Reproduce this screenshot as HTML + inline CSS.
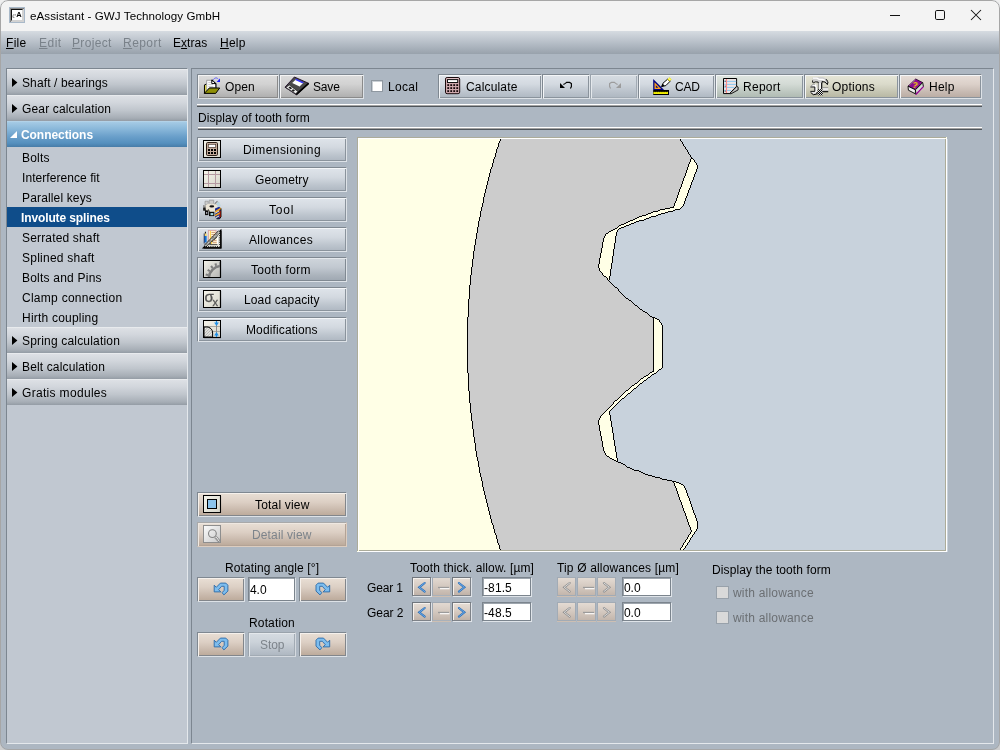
<!DOCTYPE html>
<html lang="en">
<head>
<meta charset="utf-8">
<title>eAssistant - GWJ Technology GmbH</title>
<style>
*{box-sizing:border-box;margin:0;padding:0}
html,body{width:1000px;height:750px;overflow:hidden;background:linear-gradient(#efefef,#cdcdcd)}
body{font-family:"Liberation Sans",Arial,sans-serif;font-size:12px;color:#000;position:relative}
.a{position:absolute}
svg{position:absolute;overflow:visible}
#win{position:absolute;left:0;top:0;width:1000px;height:750px;background:#adb7c2;border-radius:8px;overflow:hidden}
#frame{position:absolute;left:0;top:0;width:1000px;height:750px;border:1px solid #a6a6a6;border-radius:8px}
#title{position:absolute;left:0;top:0;width:1000px;height:31px;background:#f3f3f3}
#menu{position:absolute;left:1px;top:31px;width:998px;height:23px;background:linear-gradient(#d6dbe1 0%,#b7bfc8 50%,#98a2ac 100%)}
.tx{position:absolute;white-space:nowrap;line-height:14px;height:14px;will-change:transform}
u{text-decoration:underline;text-underline-offset:1px;text-decoration-thickness:1px}
#side{position:absolute;left:6px;top:68px;width:182px;height:676px;background:#c1c8d1;border-left:1px solid #7c8690;border-top:1px solid #7c8690;border-right:1px solid #e4e8ec;border-bottom:1px solid #e4e8ec}
.hd{position:absolute;left:7px;width:180px;height:26px;background:linear-gradient(#eef0f2 0%,#dcdfe4 6%,#d2d6dc 30%,#bfc5cc 60%,#a7aeb6 88%,#949ca5 100%)}
.hd.s{background:linear-gradient(#b9d6ea 0%,#a3c9e4 6%,#8ab8da 30%,#6a9fca 60%,#5590be 85%,#477ca8 100%)}
.tri{position:absolute;width:0;height:0;border-left:5px solid #000;border-top:4.5px solid transparent;border-bottom:4.5px solid transparent}
.selrow{position:absolute;left:7px;top:207px;width:180px;height:20px;background:#0f4d8a}
#main{position:absolute;left:191px;top:68px;width:803px;height:676px;border-left:1px solid #7c8690;border-top:1px solid #7c8690;border-right:1px solid #e4e8ec;border-bottom:1px solid #e4e8ec}
.b{position:absolute;height:25px;border-top:1px solid #7f8891;border-left:1px solid #7f8891;border-right:1px solid #dde2e7;border-bottom:1px solid #dde2e7;background:linear-gradient(#dfe4ea 0%,#d3d9e0 40%,#bcc4cd 75%,#aeb7c1 100%);box-shadow:inset 1px 1px 0 #f4f6f8, inset -1px -1px 0 #8a939c}
.b.dn{background:linear-gradient(#cfd5db 0%,#c2c9d1 40%,#abb3bc 75%,#9ea7b1 100%);box-shadow:inset 1px 1px 0 #e4e8ec, inset -1px -1px 0 #808992}
.b.dis{border-color:#9aa3ac #d5dae0 #d5dae0 #9aa3ac;box-shadow:inset 1px 1px 0 #e4e8ec, inset -1px -1px 0 #a2abb4;background:linear-gradient(#d6dce2 0%,#cbd2d9 40%,#b9c1ca 75%,#adb6c0 100%)}
.b.tan{background:linear-gradient(#e9dfd5 0%,#dccfc4 40%,#c8b8ab 75%,#bba999 100%);box-shadow:inset 1px 1px 0 #f6f1ec, inset -1px -1px 0 #82868b}
.b.tand{border-color:#a9a9a9 #dccdc0 #dccdc0 #a9a9a9;background:linear-gradient(#e9dfd5 0%,#dccfc4 40%,#c8b8ab 75%,#bba999 100%);box-shadow:inset 1px 1px 0 #efe8e1, inset -1px -1px 0 #b3a396}
.b.gry{background:linear-gradient(#dcdcdc 0%,#d2d2d2 40%,#bcbcbc 75%,#adadad 100%);box-shadow:inset 1px 1px 0 #f4f4f4, inset -1px -1px 0 #8a8a8a}
.b.grn{background:linear-gradient(#e0e6e1 0%,#d3dad5 40%,#bcc6bf 75%,#aeb9b1 100%)}
.b.olv{background:linear-gradient(#e6e6d8 0%,#dadaca 40%,#c4c4b1 75%,#b6b6a2 100%)}
.b.pnk{background:linear-gradient(#e7ded8 0%,#dbd0c9 40%,#c6b9b1 75%,#b9aba2 100%)}
.sep{position:absolute;left:198px;width:784px;height:3px;background:linear-gradient(#fff 0,#fff 33.3%,#a3a3a3 33.3%,#a3a3a3 66.6%,#4f555b 66.6%)}
.f{position:absolute;background:#fff;border:1px solid #7b848d;box-shadow:inset 1px 1px 0 #9da5ad, 1px 1px 0 #dfe4e9}
.cb{position:absolute;width:12px;height:12px;background:#fff;border:1px solid #8f98a1;box-shadow:inset 1px 1px 0 #c9cfd5}
.cbd{position:absolute;width:13px;height:13px;background:#d9d9d9;border:1px solid #98a1aa}
.sb{position:absolute;width:19px;height:19px;border:1px solid #7b7f85;border-color:#70767d #7e8288 #7e8288 #70767d;background:linear-gradient(#e6ddd5 0%,#d8cdc4 45%,#c0b2a8 100%);box-shadow:inset 1px 1px 0 #f5f1ed, 1px 1px 0 #dfe3e8}
.sb.dis{border-color:#a2abb5;box-shadow:0 1px 0 #cdbfb3;background:linear-gradient(#e4dbd3 0%,#d6cbc2 45%,#c3b6ac 100%)}
.sb.mid{border-color:#9fa8b2 #a9b1ba #a9b1ba #9fa8b2;box-shadow:0 1px 0 #cdbfb3;background:linear-gradient(#e2d9d1 0%,#d5cac1 45%,#c2b5ab 100%)}
</style>
</head>
<body>
<div id="win">
<div id="title"></div><div id="menu"></div>

<div id="side"></div>
<div class="hd" style="top:69px"></div>
<div class="hd" style="top:95px"></div>
<div class="hd s" style="top:121px"></div>
<div class="selrow"></div>
<div class="hd" style="top:327px"></div>
<div class="hd" style="top:353px"></div>
<div class="hd" style="top:379px"></div>
<svg style="left:12px;top:78px" width="6" height="9"><path d="M0 0L5.4 4.5L0 9z" fill="#000"/></svg>
<svg style="left:12px;top:104px" width="6" height="9"><path d="M0 0L5.4 4.5L0 9z" fill="#000"/></svg>
<svg style="left:12px;top:336px" width="6" height="9"><path d="M0 0L5.4 4.5L0 9z" fill="#000"/></svg>
<svg style="left:12px;top:362px" width="6" height="9"><path d="M0 0L5.4 4.5L0 9z" fill="#000"/></svg>
<svg style="left:12px;top:388px" width="6" height="9"><path d="M0 0L5.4 4.5L0 9z" fill="#000"/></svg>
<svg style="left:10px;top:131px" width="7" height="7"><path d="M7 0V7H0z" fill="#fff"/></svg>
<div id="main"></div>
<div class="b gry" style="left:197px;top:74px;width:82px"></div>
<div class="b gry" style="left:279px;top:74px;width:85px"></div>
<div class="b " style="left:438px;top:74px;width:104px"></div>
<div class="b " style="left:542px;top:74px;width:48px"></div>
<div class="b dis" style="left:590px;top:74px;width:48px"></div>
<div class="b " style="left:638px;top:74px;width:77px"></div>
<div class="b grn" style="left:715px;top:74px;width:89px"></div>
<div class="b olv" style="left:804px;top:74px;width:95px"></div>
<div class="b pnk" style="left:899px;top:74px;width:83px"></div>
<div class="cb" style="left:371px;top:80px"></div>
<div class="sep" style="top:104px;left:197px;width:785px"></div><div class="sep" style="top:127px"></div>
<div class="b " style="left:197px;top:137px;width:150px"></div>
<div class="b " style="left:197px;top:167px;width:150px"></div>
<div class="b " style="left:197px;top:197px;width:150px"></div>
<div class="b " style="left:197px;top:227px;width:150px"></div>
<div class="b dn" style="left:197px;top:257px;width:150px"></div>
<div class="b " style="left:197px;top:287px;width:150px"></div>
<div class="b " style="left:197px;top:317px;width:150px"></div>
<div class="b tan" style="left:197px;top:492px;width:150px"></div>
<div class="b tand" style="left:197px;top:522px;width:150px"></div>
<div class="b tan" style="left:197px;top:577px;width:48px"></div>
<div class="b tan" style="left:299px;top:577px;width:48px"></div>
<div class="b tan" style="left:197px;top:632px;width:48px"></div>
<div class="b dis" style="left:248px;top:632px;width:48px"></div>
<div class="b tan" style="left:299px;top:632px;width:48px"></div>
<div class="f" style="left:248px;top:577px;width:47px;height:24px"></div>
<div class="f" style="left:482px;top:577px;width:49px;height:19px"></div>
<div class="f" style="left:622px;top:577px;width:49px;height:19px"></div>
<div class="sb" style="left:412px;top:577px"></div>
<div class="sb dis" style="left:557px;top:577px"></div>
<div class="sb mid" style="left:432px;top:577px"></div>
<div class="sb dis" style="left:577px;top:577px"></div>
<div class="sb" style="left:452px;top:577px"></div>
<div class="sb dis" style="left:597px;top:577px"></div>
<div class="f" style="left:482px;top:602px;width:49px;height:19px"></div>
<div class="f" style="left:622px;top:602px;width:49px;height:19px"></div>
<div class="sb" style="left:412px;top:602px"></div>
<div class="sb dis" style="left:557px;top:602px"></div>
<div class="sb mid" style="left:432px;top:602px"></div>
<div class="sb dis" style="left:577px;top:602px"></div>
<div class="sb" style="left:452px;top:602px"></div>
<div class="sb dis" style="left:597px;top:602px"></div>
<div class="cbd" style="left:716px;top:586px"></div><div class="cbd" style="left:716px;top:611px"></div>
<svg style="left:0;top:0;will-change:transform" width="1000" height="750" viewBox="0 0 1000 750">
<defs>
<linearGradient id="gcream" x1="0" y1="0" x2="1" y2="1"><stop offset="0" stop-color="#f6f5ec"/><stop offset="1" stop-color="#d6d5ca"/></linearGradient>
<linearGradient id="ggray" x1="0" y1="0" x2="1" y2="1"><stop offset="0" stop-color="#f4f3ea"/><stop offset="1" stop-color="#b4b4b2"/></linearGradient>
<linearGradient id="gwh" x1="0" y1="0" x2="1" y2="1"><stop offset="0" stop-color="#fcfcfc"/><stop offset="1" stop-color="#c9c9c9"/></linearGradient>
<linearGradient id="gsh" x1="0" y1="0" x2="0" y2="1"><stop offset="0" stop-color="#777"/><stop offset=".35" stop-color="#fff"/><stop offset="1" stop-color="#999"/></linearGradient>
<pattern id="hatch" width="2" height="2" patternUnits="userSpaceOnUse" patternTransform="rotate(-45)"><rect width="2" height="2" fill="#f4f4ee"/><rect width="2" height=".6" fill="#8a8a8a"/></pattern>
<pattern id="chk" width="2" height="2" patternUnits="userSpaceOnUse"><rect width="2" height="2" fill="#000"/><rect width="1" height="1" fill="#ddd"/><rect x="1" y="1" width="1" height="1" fill="#ddd"/></pattern>
<clipPath id="cptf"><rect x="204" y="261" width="16" height="16"/></clipPath>
</defs>
<!-- app icon -->
<rect x="9.5" y="7.5" width="15" height="15" fill="#d2d2d2" stroke="#a9b9c9"/>
<path d="M10 8h14l-2.2 2.2h-9.6v9.6L10 22z" fill="#111"/>
<path d="M10 8h14l-1 1H11v12l-1 1z" fill="#8a8a8a"/>
<rect x="12" y="10" width="10" height="10" fill="#fff"/>
<text x="12.3" y="17.6" font-size="8.5" font-family="Liberation Serif" font-style="italic" fill="#6e6e6e">e</text><text x="16.3" y="17.4" font-size="7.5" font-weight="bold" font-family="Liberation Sans" fill="#000">A</text>
<!-- window controls -->
<g fill="none" stroke="#111" stroke-width="1"><path d="M890 15.5h10"/><rect x="935.5" y="10.5" width="9" height="9" rx="1.3"/><path d="M971 10l10 10M981 10l-10 10" stroke-width="1.05"/></g>
<!-- open -->
<path d="M206.7 91.5V80.3H212L215.6 83.8V87.6H209.5z" fill="#fff" stroke="#8c8c8c" stroke-width=".8"/>
<path d="M208.3 82.4h3M208.3 84.4h4.6M208.3 86.4h5" stroke="#c4c4c4" stroke-width=".9"/>
<path d="M211.8 79.8V83.6H216V88" stroke="#000" stroke-width="1" fill="none"/><path d="M211.8 79.8L216 83.8" stroke="#000" stroke-width="1.1"/>
<circle cx="213.3" cy="82.4" r=".7" fill="#fff"/>
<path d="M204.5 84.6V93.6" stroke="#000" stroke-width="1.1"/><path d="M205 84.7l1.3-.6" stroke="#000"/>
<path d="M205.6 85.2V92.6" stroke="#dcd548" stroke-width="1.3"/>
<path d="M209.4 88H219.7L215.7 93.4H204.3z" fill="#8f8f06" stroke="#000" stroke-width="1" stroke-linejoin="round"/>
<path d="M213.2 79.6Q216 76.4 218.4 79.2" stroke="#3535ff" stroke-width="1" fill="none" stroke-dasharray="1.6 .9"/>
<path d="M220 78.6V82H216.6z" fill="#1c1cff"/>
<!-- save -->
<path d="M294.4 77L308.8 83.4L296.4 94.8L285 87.2z" fill="#4a4a4a" stroke="#1c0a24" stroke-width=".9" stroke-linejoin="round"/>
<path d="M302 89.6L308 84L308.8 83.4L296.4 94.8L295.6 94.2z" fill="#0c0c0c"/>
<path d="M296.4 94.4L308.6 83.4" stroke="#000" stroke-width="1.8"/>
<path d="M295.8 79.4L303.2 82.8L299.6 86.4L292.2 83z" fill="#fff"/>
<path d="M296.2 78.8L303.8 82.2L302.8 83.4L295.2 80z" fill="#3636ff"/>
<path d="M299.6 86.4L303.2 82.8" stroke="#bbb" stroke-width=".6"/>
<path d="M285.8 87.4L289.4 85L297.8 91.4L295.8 93.8z" fill="#ededed" stroke="#111" stroke-width=".6"/>
<path d="M288.4 87.6L290 86.6L292.2 88.2L290.6 89.3zM291.6 90.2L293.2 89.2L295 90.6L293.4 91.7z" fill="#1a1a1a"/>
<path d="M287.4 88.8L294.6 93.4" stroke="#555" stroke-width=".7" stroke-dasharray="1 1"/>
<!-- calculator -->
<rect x="445.5" y="77.5" width="14.2" height="16.2" rx="1.6" fill="#cfa9ae" stroke="#1a0a0c" stroke-width="1"/>
<path d="M446.6 78.7h12" stroke="#e3c3c7" stroke-width="1"/>
<rect x="447.5" y="79.6" width="10.2" height="2.9" fill="#fff" stroke="#111" stroke-width="1"/>
<rect x="447.3" y="84.2" width="1.8" height="1.8" fill="#14080a"/><rect x="447.3" y="87.2" width="1.8" height="1.8" fill="#14080a"/><rect x="447.3" y="90.2" width="1.8" height="1.8" fill="#14080a"/><rect x="450.3" y="84.2" width="1.8" height="1.8" fill="#14080a"/><rect x="450.3" y="87.2" width="1.8" height="1.8" fill="#14080a"/><rect x="450.3" y="90.2" width="1.8" height="1.8" fill="#14080a"/><rect x="453.3" y="84.2" width="1.8" height="1.8" fill="#14080a"/><rect x="453.3" y="87.2" width="1.8" height="1.8" fill="#14080a"/><rect x="453.3" y="90.2" width="1.8" height="1.8" fill="#14080a"/><rect x="456.3" y="84.2" width="1.8" height="1.8" fill="#14080a"/><rect x="456.3" y="87.2" width="1.8" height="1.8" fill="#14080a"/><rect x="456.3" y="90.2" width="1.8" height="1.8" fill="#14080a"/>
<!-- undo / redo -->
<path d="M560 83V88H565z" fill="#000"/><path d="M563.4 84.6L565.4 83.4L566.6 82.4H569.6L571.4 83.6V86.6L570.4 88.6" fill="none" stroke="#000" stroke-width="1.15"/>
<path d="M621 83V88H616z" fill="#9c9c9c"/><path d="M617.6 84.6L615.6 83.4L614.4 82.4H611.4L609.6 83.6V86.6L610.6 88.6" fill="none" stroke="#9c9c9c" stroke-width="1.15"/>
<!-- CAD -->
<path d="M653.2 79V90.2H664.4z" fill="#000084"/>
<path d="M654.5 82.2V88.9H661.2z" fill="#ffa21c"/>
<path d="M655.8 85.2V87.7H658.4z" fill="#000084"/>
<rect x="653.2" y="90" width="15.8" height="5" fill="#000"/>
<path d="M653.4 92.9h14.6" stroke="#f2ee00" stroke-width="2.2"/><path d="M653.6 91.7h14.4" stroke="#000" stroke-width="1" stroke-dasharray=".7 1.1"/>
<path d="M661.6 86.6L663 83.2L667.6 79.2L670 81.4L665.8 85.6z" fill="#fff" stroke="#000" stroke-width="1" stroke-linejoin="round"/>
<path d="M661.3 87L662.7 83.8L664.6 85.6z" fill="#000"/>
<path d="M667.4 79.2L669.4 77.2L671.6 79.4L670 81.4z" fill="#f2ea00"/><path d="M668.6 78.2L670.6 80.2" stroke="#fff" stroke-width=".9"/><circle cx="670.4" cy="80.9" r=".45" fill="#3030a0"/>
<!-- report -->
<path d="M723.5 78.5H736.6V86.2L729.6 93.6H723.5z" fill="#ece4e4" stroke="#000" stroke-width="1"/>
<path d="M724.2 81.4h12M724.2 84.4h12M724.2 87.4h10M724.2 90.4h7" stroke="#8cc8f0" stroke-width="1"/>
<path d="M726.5 79V93" stroke="#ff8a8a" stroke-width="1.1"/>
<path d="M725.2 80.7v1M725.2 85.7v1M725.2 90.7v1" stroke="#222" stroke-width=".9"/>
<path d="M736.8 86.4L738.1 87.1V89.9L731.2 93.7H729.6z" fill="#c6c6c6" stroke="#000" stroke-width=".9" stroke-linejoin="round"/>
<!-- options -->
<path d="M812.4 78.6Q812.4 77.2 814 77.1H822Q826.4 77.6 827.9 82.4L827.6 84.2Q825.6 80.9 822.2 81.3V83.2H818.4V81.7Q815 81 813 82.6L812.4 81.6z" fill="#cfcfcf"/>
<path d="M813 78.2H817L819 79.4H822.4L825 80.4" stroke="#fff" stroke-width="1.3" fill="none"/>
<path d="M812.6 80.4V82.2L813.2 82.9Q815 81.3 818.2 82V83.2" stroke="#000" stroke-width=".9" fill="none"/>
<path d="M822 83.2V81.6Q825.4 81 827.4 84.6L827.9 82.2Q827.4 80.4 826.2 79.2" stroke="#000" stroke-width="1" fill="none"/>
<path d="M826 79L827.9 82.6" stroke="#555" stroke-width=".9"/>
<rect x="818.4" y="83" width="3.8" height="6.4" fill="#bdbdbd"/><rect x="819.3" y="83" width="1.5" height="6.4" fill="#fff"/><path d="M821.7 83V89.4" stroke="#000" stroke-width="1.1"/><path d="M818.4 83V89.4" stroke="#666" stroke-width=".7"/>
<rect x="817.6" y="89.2" width="5.2" height="6.2" fill="url(#chk)"/>
<path d="M810.3 86.6L813 84.4H816.4Q818 89 816.6 93.8L813.4 94.6L810.3 92.2L811 91.2H814.6V87.4H811z" fill="#e2e2e2"/>
<path d="M812.8 85.2H815.6Q816.6 89 815.8 92.6" stroke="#fff" stroke-width="1.2" fill="none"/>
<path d="M810.4 87H814.8V91.4H810.4" stroke="#000" stroke-width=".9" fill="none"/>
<path d="M810.6 92.4L813.4 94.7L816.8 94L817.2 92" stroke="#000" stroke-width="1" fill="none"/>
<path d="M810.8 86.2L813 84.3H815" stroke="#777" stroke-width=".6" fill="none"/>
<rect x="822.6" y="87.3" width="5.6" height="4.4" fill="url(#gsh)"/><path d="M822.6 91.7h5.6" stroke="#000" stroke-width="1.1"/>
<!-- help -->
<path d="M915.7 79L922.7 82.6L915.4 89.8L908 86.2z" fill="#8c0a92" stroke="#1c001c" stroke-width=".8" stroke-linejoin="round"/>
<path d="M909.2 85.4L915.4 79.6" stroke="#e8c8e8" stroke-width=".8" stroke-dasharray=".7 .7"/>
<path d="M908 86.2L915.4 89.8V93.8L908.4 90.2z" fill="#f2f2f2" stroke="#000" stroke-width=".9" stroke-linejoin="round"/>
<path d="M915.4 89.8L922.7 82.6L923.4 86.4L916 94.3z" fill="#d6dad6" stroke="#000" stroke-width=".9" stroke-linejoin="round"/>
<path d="M915.7 94.5L923.5 86.6" stroke="#a000a0" stroke-width="1.1"/>
<text x="912.6" y="87.9" font-size="9" font-weight="bold" font-family="Liberation Sans" fill="#f6ea00" transform="rotate(14 915 85)">?</text>
<!-- left icons: dimensioning -->
<rect x="203.5" y="140.5" width="17" height="17" fill="url(#gcream)" stroke="#000"/>
<rect x="206.5" y="142.5" width="11" height="13" rx="1.2" fill="#c3ab9b" stroke="#2c1e16" stroke-width="1"/>
<rect x="208.3" y="144.3" width="7.4" height="3" fill="#fff" stroke="#3a2a20" stroke-width=".6"/>
<path d="M208 149h2v2h-2zM211 149h2v2h-2zM214 149h2v2h-2zM208 152h2v2h-2zM211 152h2v2h-2zM214 152h2v2h-2z" fill="#000"/>
<!-- geometry -->
<rect x="203.5" y="170.5" width="17" height="17" fill="url(#gcream)" stroke="#000"/>
<path d="M208.5 171V187M215.5 171V187M204 174.5H220M204 183.5H220" stroke="#b59aa2" stroke-width="1"/>
<!-- tool -->
<path d="M205 204.6V201.2H208.2V204.6zM209.2 204.2V200.2H213.7V204.2zM214.3 204.8L216.9 201.3L218.7 202.5L217.5 205.6z" fill="#cbcbcb" stroke="#8a8a8a" stroke-width=".6"/>
<path d="M203.2 205H206.2V210.6H203.2z" fill="#5c5c5c"/><path d="M203.2 208H206.2V210.6H203.2z" fill="#1c1c1c"/><path d="M203.4 205.2H205.8V206.6H203.4z" fill="#bdbdbd"/>
<path d="M205.6 205.2L208.2 203.8H214.2L218 205.4L216.8 209.2L213.8 211.8H208.6L205.8 209.8z" fill="#ece5d6"/>
<ellipse cx="211.8" cy="206.4" rx="2.4" ry="1.15" fill="#111"/><path d="M210 205.8q1.8-1.3 3.6 0" stroke="#555" stroke-width=".5" fill="none"/>
<path d="M205 210.4H208.3V215.1H205z" fill="#0a0a0a"/><rect x="206" y="212.3" width="1.3" height="1.3" fill="#e4e4f6"/>
<path d="M208.3 209.4L209.4 211.8" stroke="#111" stroke-width=".9"/>
<path d="M209 211.8H214.3V216.1H209z" fill="#0a0a0a"/><rect x="210.5" y="213.1" width="2.8" height="2.1" fill="#a8dcea"/>
<path d="M216.3 203L219 202L220.9 205.8L218 207z" fill="#b9d6e2"/><path d="M214.6 203.8L217.2 201.4" stroke="#555" stroke-width=".7"/>
<path d="M215 208.4L219.2 206.8L221 208.4V216.8L219.6 218.8H216.6L215 216.8z" fill="#1c2c94"/>
<path d="M215 211L221 207.6V209.4L215 212.8zM215 214.8L221 211.4V213.2L215 216.6z" fill="#f7a416"/>
<path d="M215 212.8L219 210.5V211.5L215 213.8zM215.6 217.3L219 215.4V216.4L216.4 217.9z" fill="#fff6c8"/>
<path d="M219.6 211.2L221 210.4V216.8L219.6 218.2z" fill="#e0240c"/>
<path d="M221 208.4V216.8L219.6 218.8H216.6" stroke="#000" stroke-width=".9" fill="none"/>
<!-- allowances -->
<rect x="208.4" y="230.4" width="7.6" height="14.4" fill="#fdf3d4" stroke="#d9a3a3" stroke-width=".9"/>
<path d="M210.4 231V244.4" stroke="#ffd246" stroke-width="1"/>
<path d="M211.4 232.5h4M211.4 234.5h4M211.4 236.5h4M211.4 238.5h4M212.4 240.6h3.2M212.4 242.6h3.2" stroke="#c58a68" stroke-width=".8"/>
<path d="M203.3 247.8L220.8 230.1V247.8z" fill="#e2e2da" stroke="#000" stroke-width="1.2" stroke-linejoin="miter"/>
<path d="M209.6 244.6H217.6V236.4z" fill="#fdf3d4" stroke="#222" stroke-width=".8"/>
<path d="M211.6 244V238.6" stroke="#ffd246" stroke-width="1"/><path d="M213 240.6h3.6M213 242.6h3.6" stroke="#c58a68" stroke-width=".8"/>
<path d="M217.6 236.6V244.6" stroke="#fff" stroke-width="1.2"/>
<path d="M205.2 246L219.4 231.6" stroke="#000" stroke-width="2.9"/><path d="M205.4 245.8L219.4 231.6" stroke="#e6e6de" stroke-width="1.6"/><path d="M206.4 244.8L219.2 231.8" stroke="#000" stroke-width=".8" stroke-dasharray=".8 1.2"/>
<path d="M206 246.6H219.6" stroke="#000" stroke-width="1" stroke-dasharray=".9 1.3"/><path d="M219.7 233V246.4" stroke="#000" stroke-width="1" stroke-dasharray=".9 1.3"/>
<path d="M203.6 247.9H220.9V230.4" stroke="#000" stroke-width="1.3" fill="none"/>
<rect x="204.3" y="235.8" width="2.3" height="6.6" fill="#1273d6"/><path d="M204.3 233.4H206.6V236H204.3z" fill="#ffda66"/><path d="M204.9 231.8H206V233.6H204.9z" fill="#222"/><path d="M204.2 233.4V243.6" stroke="#0a1a50" stroke-width=".8"/>
<!-- tooth form -->
<rect x="203.5" y="260.5" width="17" height="17" fill="url(#ggray)" stroke="#000"/><path d="M204 277.5H221M220.5 261V277.5" stroke="#000" stroke-width="1.2"/>
<g clip-path="url(#cptf)"><circle cx="221.5" cy="278.5" r="12.6" fill="none" stroke="#7e7e7e" stroke-width="2.6"/><circle cx="221.5" cy="278.5" r="15" fill="none" stroke="#7e7e7e" stroke-width="2.6" stroke-dasharray="2 2.6" stroke-dashoffset="1"/></g>
<!-- load capacity -->
<rect x="203.5" y="290.5" width="17" height="17" fill="url(#gcream)" stroke="#000"/><path d="M204 307.5H221M220.5 291V307.5" stroke="#000" stroke-width="1.2"/>
<text x="204.6" y="302.2" font-size="15" font-family="Liberation Sans" fill="#555" stroke="#555" stroke-width=".35">σ</text><text x="212.6" y="305.8" font-size="11" font-family="Liberation Sans" fill="#555" stroke="#555" stroke-width=".3">x</text>
<!-- modifications -->
<rect x="203.5" y="320.5" width="17" height="17" fill="url(#gcream)" stroke="#000"/><path d="M204 337.5H221" stroke="#000" stroke-width="1.2"/>
<path d="M204 326.5H220M211 331.5H220" stroke="#a8a8a0" stroke-width="1"/><path d="M216.5 321V337" stroke="#8a8a8a" stroke-width="1"/>
<path d="M204 337V327H208Q212.6 328.4 212.6 333V337z" fill="url(#hatch)" stroke="#000" stroke-width="1"/>
<path d="M214.2 322.6H218.8L216.5 326z" fill="#1e8fe6"/><path d="M216.5 321V323" stroke="#1e8fe6" stroke-width="1.2"/>
<path d="M214.2 335.4H218.8L216.5 332z" fill="#1e8fe6"/><path d="M216.5 335V337" stroke="#1e8fe6" stroke-width="1.2"/>
<!-- total view -->
<rect x="203.5" y="495.5" width="17" height="17" fill="url(#gcream)" stroke="#000"/><path d="M204 512.5H221M220.5 496V512.5" stroke="#000" stroke-width="1.1"/>
<rect x="207.5" y="499.5" width="9" height="9" fill="#8cc4ec" stroke="#000"/>
<!-- detail view -->
<rect x="203.5" y="525.5" width="17" height="17" fill="url(#gwh)" stroke="#8e8e8e"/>
<circle cx="212.4" cy="533.6" r="3.9" fill="none" stroke="#858585" stroke-width="1.1"/>
<path d="M215.4 537L219.6 541.4" stroke="#8a8a8a" stroke-width="3"/><path d="M215.8 537.2L219.4 541" stroke="#f4f4f4" stroke-width="1.5" stroke-dasharray="1 .8"/>
<!-- rotate arrows -->
<g fill="#7dbdee" stroke="#2b69a6" stroke-width=".9" stroke-linejoin="round">
<path d="M214.2 585.2L214.2 591.9L220.8 591.9L218.6 589.7L221.6 586.3L224.2 586.3L224.2 590.3L222.1 592.7L223.9 594.9L227.9 591.1L227.9 585.2L225.8 583.1L220.4 583.1L216.3 587.3z"/><path d="M329.7 585.2L329.7 591.9L323.1 591.9L325.3 589.7L322.3 586.3L319.7 586.3L319.7 590.3L321.8 592.7L320.0 594.9L316.0 591.1L316.0 585.2L318.1 583.1L323.5 583.1L327.6 587.3z"/><path d="M214.2 640.2L214.2 646.9L220.8 646.9L218.6 644.7L221.6 641.3L224.2 641.3L224.2 645.3L222.1 647.7L223.9 649.9L227.9 646.1L227.9 640.2L225.8 638.1L220.4 638.1L216.3 642.3z"/><path d="M329.7 640.2L329.7 646.9L323.1 646.9L325.3 644.7L322.3 641.3L319.7 641.3L319.7 645.3L321.8 647.7L320.0 649.9L316.0 646.1L316.0 640.2L318.1 638.1L323.5 638.1L327.6 642.3z"/></g>
<path d="M424.7 583.0L419.2 587.3L424.7 591.6" fill="none" stroke="#2f6fb5" stroke-width="2.1" stroke-linecap="round" stroke-linejoin="miter"/><path d="M424.7 583.0L419.2 587.3L424.7 591.6" fill="none" stroke="#6fb0ee" stroke-width="0.9" stroke-linecap="round" stroke-linejoin="miter"/><path d="M438 587.5h11" stroke="#9b9b9b" stroke-width="1.3"/><path d="M440 588.7h9.5" stroke="#fff" stroke-width="1.1"/><path d="M458.9 583.0L464.4 587.3L458.9 591.6" fill="none" stroke="#2f6fb5" stroke-width="2.1" stroke-linecap="round" stroke-linejoin="miter"/><path d="M458.9 583.0L464.4 587.3L458.9 591.6" fill="none" stroke="#6fb0ee" stroke-width="0.9" stroke-linecap="round" stroke-linejoin="miter"/><path d="M424.7 608.0L419.2 612.3L424.7 616.6" fill="none" stroke="#2f6fb5" stroke-width="2.1" stroke-linecap="round" stroke-linejoin="miter"/><path d="M424.7 608.0L419.2 612.3L424.7 616.6" fill="none" stroke="#6fb0ee" stroke-width="0.9" stroke-linecap="round" stroke-linejoin="miter"/><path d="M438 612.5h11" stroke="#9b9b9b" stroke-width="1.3"/><path d="M440 613.7h9.5" stroke="#fff" stroke-width="1.1"/><path d="M458.9 608.0L464.4 612.3L458.9 616.6" fill="none" stroke="#2f6fb5" stroke-width="2.1" stroke-linecap="round" stroke-linejoin="miter"/><path d="M458.9 608.0L464.4 612.3L458.9 616.6" fill="none" stroke="#6fb0ee" stroke-width="0.9" stroke-linecap="round" stroke-linejoin="miter"/><path d="M569.7 583.0L564.2 587.3L569.7 591.6" fill="none" stroke="#8e8e8e" stroke-width="2.1" stroke-linecap="round" stroke-linejoin="miter"/><path d="M569.7 583.0L564.2 587.3L569.7 591.6" fill="none" stroke="#e2e2e2" stroke-width="0.9" stroke-linecap="round" stroke-linejoin="miter"/><path d="M583 587.5h11" stroke="#9b9b9b" stroke-width="1.3"/><path d="M585 588.7h9.5" stroke="#fff" stroke-width="1.1"/><path d="M603.9 583.0L609.4 587.3L603.9 591.6" fill="none" stroke="#8e8e8e" stroke-width="2.1" stroke-linecap="round" stroke-linejoin="miter"/><path d="M603.9 583.0L609.4 587.3L603.9 591.6" fill="none" stroke="#e2e2e2" stroke-width="0.9" stroke-linecap="round" stroke-linejoin="miter"/><path d="M569.7 608.0L564.2 612.3L569.7 616.6" fill="none" stroke="#8e8e8e" stroke-width="2.1" stroke-linecap="round" stroke-linejoin="miter"/><path d="M569.7 608.0L564.2 612.3L569.7 616.6" fill="none" stroke="#e2e2e2" stroke-width="0.9" stroke-linecap="round" stroke-linejoin="miter"/><path d="M583 612.5h11" stroke="#9b9b9b" stroke-width="1.3"/><path d="M585 613.7h9.5" stroke="#fff" stroke-width="1.1"/><path d="M603.9 608.0L609.4 612.3L603.9 616.6" fill="none" stroke="#8e8e8e" stroke-width="2.1" stroke-linecap="round" stroke-linejoin="miter"/><path d="M603.9 608.0L609.4 612.3L603.9 616.6" fill="none" stroke="#e2e2e2" stroke-width="0.9" stroke-linecap="round" stroke-linejoin="miter"/>
</svg>
<svg id="cv" style="left:357px;top:137px" width="590" height="415" viewBox="357 137 590 415" shape-rendering="crispEdges">
    <rect x="357" y="137" width="590" height="415" fill="#ffffe6"/>
    <path d="M679.5,138.5 L691.5,157.5 L696.5,163.5 L697.5,167.5 L684.5,202.5 L683.5,205.5 L680.5,208.5 L678.5,209.5 L675.5,209.5 L673.5,210.5 L671.5,211.5 L668.5,211.5 L666.5,212.5 L663.5,213.5 L661.5,213.5 L659.5,214.5 L656.5,215.5 L654.5,216.5 L651.5,216.5 L649.5,217.5 L647.5,218.5 L644.5,219.5 L642.5,220.5 L639.5,220.5 L637.5,221.5 L634.5,222.5 L632.5,223.5 L629.5,224.5 L627.5,225.5 L624.5,226.5 L622.5,227.5 L619.5,228.5 L616.5,232.5 L609.5,279.5 L604.5,284.5 L650.5,322.5 L653.5,317.5 L658.5,319.5 L662.5,325.5 L662.5,367.5 L657.5,371.5 L655.5,373.5 L652.5,374.5 L650.5,376.5 L648.5,377.5 L646.5,379.5 L644.5,380.5 L642.5,382.5 L640.5,383.5 L638.5,385.5 L636.5,387.5 L634.5,388.5 L632.5,390.5 L630.5,392.5 L628.5,393.5 L626.5,395.5 L624.5,397.5 L622.5,398.5 L620.5,400.5 L618.5,402.5 L617.5,403.5 L615.5,405.5 L613.5,407.5 L611.5,409.5 L609.5,411.5 L617.5,461.5 L612.5,470.5 L670.5,486.5 L673.5,481.5 L678.5,482.5 L683.5,485.5 L685.5,488.5 L697.5,522.5 L697.5,528.5 L682.5,551.5 L947.5,551.5 L947.5,138.5Z" fill="#c8d2dc"/>
    <path d="M500.5,138.5 L679.5,138.5 L691.5,157.5 L673.5,207.5 L670.5,207.5 L668.5,208.5 L665.5,208.5 L663.5,209.5 L661.5,209.5 L658.5,210.5 L656.5,211.5 L653.5,211.5 L651.5,212.5 L649.5,213.5 L646.5,214.5 L644.5,215.5 L642.5,215.5 L640.5,216.5 L637.5,217.5 L635.5,218.5 L633.5,219.5 L631.5,220.5 L628.5,221.5 L626.5,222.5 L624.5,223.5 L622.5,224.5 L619.5,225.5 L617.5,227.5 L609.5,231.5 L605.5,234.5 L603.5,239.5 L598.5,266.5 L599.5,270.5 L601.5,272.5 L603.5,275.5 L606.5,277.5 L608.5,280.5 L610.5,282.5 L612.5,284.5 L614.5,286.5 L617.5,288.5 L619.5,291.5 L621.5,293.5 L623.5,295.5 L625.5,297.5 L628.5,299.5 L630.5,300.5 L632.5,302.5 L634.5,304.5 L637.5,306.5 L639.5,308.5 L641.5,309.5 L643.5,311.5 L646.5,312.5 L648.5,314.5 L650.5,316.5 L653.5,317.5 L653.5,371.5 L650.5,372.5 L648.5,374.5 L646.5,375.5 L643.5,377.5 L641.5,378.5 L639.5,380.5 L637.5,382.5 L634.5,384.5 L632.5,385.5 L630.5,387.5 L628.5,389.5 L625.5,391.5 L623.5,393.5 L621.5,395.5 L619.5,397.5 L617.5,399.5 L614.5,401.5 L612.5,404.5 L610.5,406.5 L608.5,408.5 L606.5,410.5 L603.5,413.5 L601.5,415.5 L599.5,418.5 L598.5,422.5 L603.5,449.5 L605.5,454.5 L609.5,457.5 L617.5,461.5 L619.5,462.5 L622.5,463.5 L624.5,464.5 L626.5,466.5 L628.5,467.5 L631.5,468.5 L633.5,469.5 L635.5,470.5 L637.5,470.5 L640.5,471.5 L642.5,472.5 L644.5,473.5 L646.5,474.5 L649.5,475.5 L651.5,475.5 L653.5,476.5 L656.5,477.5 L658.5,477.5 L661.5,478.5 L663.5,479.5 L665.5,479.5 L668.5,480.5 L670.5,480.5 L673.5,481.5 L691.5,531.5 L679.5,550.5 L500.5,551.5 L500.5,550.5 L499.5,548.5 L499.5,546.5 L498.5,544.5 L497.5,542.5 L497.5,540.5 L496.5,538.5 L496.5,536.5 L495.5,534.5 L494.5,532.5 L494.5,530.5 L493.5,528.5 L493.5,526.5 L492.5,524.5 L491.5,522.5 L491.5,520.5 L490.5,518.5 L490.5,516.5 L489.5,514.5 L489.5,512.5 L488.5,510.5 L488.5,508.5 L487.5,506.5 L487.5,504.5 L486.5,502.5 L486.5,500.5 L485.5,498.5 L485.5,496.5 L484.5,494.5 L484.5,492.5 L483.5,490.5 L483.5,488.5 L482.5,486.5 L482.5,484.5 L482.5,482.5 L481.5,480.5 L481.5,478.5 L480.5,476.5 L480.5,474.5 L479.5,472.5 L479.5,470.5 L479.5,468.5 L478.5,466.5 L478.5,464.5 L478.5,462.5 L477.5,460.5 L477.5,458.5 L476.5,456.5 L476.5,454.5 L476.5,452.5 L475.5,450.5 L475.5,448.5 L475.5,446.5 L475.5,444.5 L474.5,442.5 L474.5,440.5 L474.5,438.5 L473.5,436.5 L473.5,434.5 L473.5,432.5 L473.5,430.5 L472.5,428.5 L472.5,426.5 L472.5,424.5 L472.5,422.5 L471.5,420.5 L471.5,418.5 L471.5,416.5 L471.5,414.5 L470.5,412.5 L470.5,410.5 L470.5,408.5 L470.5,406.5 L470.5,404.5 L469.5,402.5 L469.5,400.5 L469.5,398.5 L469.5,396.5 L469.5,394.5 L469.5,392.5 L468.5,390.5 L468.5,388.5 L468.5,386.5 L468.5,384.5 L468.5,382.5 L468.5,380.5 L468.5,378.5 L468.5,376.5 L468.5,374.5 L467.5,372.5 L467.5,370.5 L467.5,368.5 L467.5,366.5 L467.5,364.5 L467.5,362.5 L467.5,360.5 L467.5,358.5 L467.5,356.5 L467.5,354.5 L467.5,352.5 L467.5,350.5 L467.5,348.5 L467.5,346.5 L467.5,344.5 L467.5,342.5 L467.5,340.5 L467.5,338.5 L467.5,336.5 L467.5,334.5 L467.5,332.5 L467.5,330.5 L467.5,328.5 L467.5,326.5 L467.5,324.5 L467.5,322.5 L467.5,320.5 L467.5,318.5 L468.5,316.5 L468.5,314.5 L468.5,312.5 L468.5,310.5 L468.5,308.5 L468.5,306.5 L468.5,304.5 L468.5,302.5 L468.5,300.5 L469.5,298.5 L469.5,296.5 L469.5,294.5 L469.5,292.5 L469.5,290.5 L469.5,288.5 L469.5,286.5 L470.5,284.5 L470.5,282.5 L470.5,280.5 L470.5,278.5 L470.5,276.5 L471.5,274.5 L471.5,272.5 L471.5,270.5 L471.5,268.5 L472.5,266.5 L472.5,264.5 L472.5,262.5 L472.5,260.5 L473.5,258.5 L473.5,256.5 L473.5,254.5 L473.5,252.5 L474.5,250.5 L474.5,248.5 L474.5,246.5 L475.5,244.5 L475.5,242.5 L475.5,240.5 L476.5,238.5 L476.5,236.5 L476.5,234.5 L477.5,232.5 L477.5,230.5 L477.5,228.5 L478.5,226.5 L478.5,224.5 L478.5,222.5 L479.5,220.5 L479.5,218.5 L480.5,216.5 L480.5,214.5 L480.5,212.5 L481.5,210.5 L481.5,208.5 L482.5,206.5 L482.5,204.5 L483.5,202.5 L483.5,200.5 L483.5,198.5 L484.5,196.5 L484.5,194.5 L485.5,192.5 L485.5,190.5 L486.5,188.5 L486.5,186.5 L487.5,184.5 L487.5,182.5 L488.5,180.5 L488.5,178.5 L489.5,176.5 L489.5,174.5 L490.5,172.5 L490.5,170.5 L491.5,168.5 L492.5,166.5 L492.5,164.5 L493.5,162.5 L493.5,160.5 L494.5,158.5 L495.5,156.5 L495.5,154.5 L496.5,152.5 L496.5,150.5 L497.5,148.5 L498.5,146.5 L498.5,144.5 L499.5,142.5 L500.5,140.5 L500.5,138.5Z" fill="#cccccc"/>
    <path d="M467 317h1v56h-1zM468 299h1v18h-1zM468 373h1v18h-1zM469 285h1v14h-1zM469 391h1v12h-1zM470 275h1v10h-1zM470 403h1v10h-1zM471 267h1v8h-1zM471 413h1v8h-1zM472 259h1v8h-1zM472 421h1v8h-1zM473 251h1v8h-1zM473 429h1v8h-1zM474 245h1v6h-1zM474 437h1v6h-1zM475 239h1v6h-1zM475 443h1v8h-1zM476 233h1v6h-1zM476 451h1v6h-1zM477 227h1v6h-1zM477 457h1v4h-1zM478 221h1v6h-1zM478 461h1v6h-1zM479 217h1v4h-1zM479 467h1v6h-1zM480 211h1v6h-1zM480 473h1v4h-1zM481 207h1v4h-1zM481 477h1v4h-1zM482 203h1v4h-1zM482 481h1v6h-1zM483 197h1v6h-1zM483 487h1v4h-1zM484 193h1v4h-1zM484 491h1v4h-1zM485 189h1v4h-1zM485 495h1v4h-1zM486 185h1v4h-1zM486 499h1v4h-1zM487 181h1v4h-1zM487 503h1v4h-1zM488 177h1v4h-1zM488 507h1v4h-1zM489 173h1v4h-1zM489 511h1v4h-1zM490 169h1v4h-1zM490 515h1v4h-1zM491 167h1v2h-1zM491 519h1v4h-1zM492 163h1v4h-1zM492 523h1v2h-1zM493 159h1v4h-1zM493 525h1v4h-1zM494 157h1v2h-1zM494 529h1v4h-1zM495 153h1v4h-1zM495 533h1v2h-1zM496 149h1v4h-1zM496 535h1v4h-1zM497 147h1v2h-1zM497 539h1v4h-1zM498 143h1v4h-1zM498 543h1v2h-1zM499 141h1v2h-1zM499 545h1v4h-1zM500 139h1v2h-1zM500 549h1v1h-1zM598 264h1v4h-1zM598 420h1v5h-1zM599 258h1v6h-1zM599 268h1v3h-1zM599 418h1v2h-1zM599 425h1v6h-1zM600 253h1v5h-1zM600 271h1v1h-1zM600 416h1v2h-1zM600 431h1v5h-1zM601 248h1v5h-1zM601 272h1v1h-1zM601 415h1v1h-1zM601 436h1v5h-1zM602 242h1v6h-1zM602 273h1v2h-1zM602 414h1v1h-1zM602 441h1v6h-1zM603 238h1v4h-1zM603 275h1v1h-1zM603 413h1v1h-1zM603 447h1v4h-1zM604 236h1v2h-1zM604 412h1v1h-1zM604 451h1v2h-1zM604 276h2v1h-2zM605 234h1v2h-1zM605 411h1v1h-1zM605 453h1v2h-1zM606 277h1v1h-1zM606 410h1v1h-1zM606 455h1v1h-1zM606 233h2v1h-2zM607 278h1v2h-1zM607 409h1v1h-1zM607 456h2v1h-2zM608 232h1v1h-1zM608 280h1v1h-1zM608 408h1v1h-1zM609 276h1v4h-1zM609 281h1v1h-1zM609 407h1v1h-1zM609 411h1v4h-1zM609 457h1v1h-1zM609 231h2v1h-2zM610 269h1v7h-1zM610 282h1v1h-1zM610 406h1v1h-1zM610 410h1v1h-1zM610 415h1v6h-1zM610 458h2v1h-2zM611 263h1v6h-1zM611 283h1v1h-1zM611 405h1v1h-1zM611 409h1v1h-1zM611 421h1v6h-1zM611 230h2v1h-2zM612 256h1v7h-1zM612 284h1v1h-1zM612 404h1v1h-1zM612 408h1v1h-1zM612 427h1v6h-1zM612 459h2v1h-2zM613 249h1v7h-1zM613 285h1v1h-1zM613 402h1v2h-1zM613 407h1v1h-1zM613 433h1v7h-1zM613 229h2v1h-2zM614 243h1v6h-1zM614 286h1v1h-1zM614 401h1v1h-1zM614 406h1v1h-1zM614 440h1v6h-1zM614 460h2v1h-2zM615 236h1v7h-1zM615 405h1v1h-1zM615 446h1v6h-1zM615 228h2v1h-2zM615 287h2v1h-2zM615 400h2v1h-2zM616 232h1v4h-1zM616 404h1v1h-1zM616 452h1v6h-1zM616 461h2v1h-2zM617 227h1v1h-1zM617 230h1v2h-1zM617 288h1v1h-1zM617 399h1v1h-1zM617 403h1v1h-1zM617 458h1v3h-1zM618 226h1v1h-1zM618 229h1v1h-1zM618 289h1v2h-1zM618 398h1v1h-1zM618 402h1v1h-1zM618 462h3v1h-3zM619 291h1v1h-1zM619 397h1v1h-1zM619 401h1v1h-1zM619 225h2v1h-2zM619 228h2v1h-2zM620 292h1v1h-1zM620 396h1v1h-1zM620 400h1v1h-1zM621 293h1v1h-1zM621 395h1v1h-1zM621 399h1v1h-1zM621 463h2v1h-2zM621 224h3v1h-3zM621 227h3v1h-3zM622 294h1v1h-1zM622 394h1v1h-1zM622 398h2v1h-2zM623 295h1v1h-1zM623 393h1v1h-1zM623 464h2v1h-2zM624 296h1v1h-1zM624 392h1v1h-1zM624 397h1v1h-1zM624 223h2v1h-2zM624 226h2v1h-2zM625 297h1v1h-1zM625 391h1v1h-1zM625 396h1v1h-1zM625 465h1v1h-1zM626 395h1v1h-1zM626 466h1v1h-1zM626 222h2v1h-2zM626 298h2v1h-2zM626 390h2v1h-2zM626 225h3v1h-3zM627 394h1v1h-1zM627 467h3v1h-3zM628 299h1v1h-1zM628 389h1v1h-1zM628 221h2v1h-2zM628 393h2v1h-2zM629 388h1v1h-1zM629 224h2v1h-2zM629 300h2v1h-2zM630 387h1v1h-1zM630 392h1v1h-1zM630 468h2v1h-2zM630 220h3v1h-3zM631 301h1v1h-1zM631 386h1v1h-1zM631 391h1v1h-1zM631 223h3v1h-3zM632 302h1v1h-1zM632 390h1v1h-1zM632 385h2v1h-2zM632 469h2v1h-2zM633 303h1v1h-1zM633 389h1v1h-1zM633 219h2v1h-2zM634 304h1v1h-1zM634 384h1v1h-1zM634 222h2v1h-2zM634 388h2v1h-2zM634 470h5v1h-5zM635 218h2v1h-2zM635 305h2v1h-2zM635 383h2v1h-2zM636 387h1v1h-1zM636 221h3v1h-3zM637 306h1v1h-1zM637 382h1v1h-1zM637 386h1v1h-1zM637 217h2v1h-2zM638 307h1v1h-1zM638 381h1v1h-1zM638 385h1v1h-1zM639 308h1v1h-1zM639 380h1v1h-1zM639 384h1v1h-1zM639 471h2v1h-2zM639 216h3v1h-3zM639 220h5v1h-5zM640 379h1v1h-1zM640 309h2v1h-2zM640 383h2v1h-2zM641 378h2v1h-2zM641 472h2v1h-2zM642 310h1v1h-1zM642 382h1v1h-1zM642 215h4v1h-4zM643 377h1v1h-1zM643 381h1v1h-1zM643 311h2v1h-2zM643 473h2v1h-2zM644 219h2v1h-2zM644 376h2v1h-2zM644 380h2v1h-2zM645 312h2v1h-2zM645 474h3v1h-3zM646 379h1v1h-1zM646 214h2v1h-2zM646 375h2v1h-2zM646 218h3v1h-3zM647 313h1v1h-1zM647 378h1v1h-1zM648 314h1v1h-1zM648 374h1v1h-1zM648 377h2v1h-2zM648 213h3v1h-3zM648 475h4v1h-4zM649 315h1v1h-1zM649 373h1v1h-1zM649 217h2v1h-2zM650 376h1v1h-1zM650 316h2v1h-2zM650 372h2v1h-2zM651 375h1v1h-1zM651 212h2v1h-2zM651 216h5v1h-5zM652 371h2v1h-2zM652 374h2v1h-2zM652 317h3v1h-3zM652 476h3v1h-3zM653 318h1v53h-1zM653 211h5v1h-5zM654 373h2v1h-2zM655 318h2v1h-2zM655 477h5v1h-5zM656 372h1v1h-1zM656 215h2v1h-2zM657 371h1v1h-1zM657 319h2v1h-2zM658 370h1v1h-1zM658 210h2v1h-2zM658 214h3v1h-3zM659 320h1v2h-1zM659 369h2v1h-2zM660 322h1v1h-1zM660 478h2v1h-2zM660 209h5v1h-5zM661 323h1v2h-1zM661 368h1v1h-1zM661 213h4v1h-4zM662 325h1v43h-1zM662 479h5v1h-5zM665 212h3v1h-3zM665 208h5v1h-5zM667 480h5v1h-5zM668 211h5v1h-5zM670 207h4v1h-4zM672 481h4v1h-4zM673 206h1v1h-1zM673 482h1v1h-1zM673 210h2v1h-2zM674 203h1v3h-1zM674 483h1v3h-1zM675 201h1v2h-1zM675 486h1v2h-1zM675 209h5v1h-5zM676 198h1v3h-1zM676 488h1v3h-1zM676 482h3v1h-3zM677 195h1v3h-1zM677 491h1v3h-1zM678 192h1v3h-1zM678 494h1v3h-1zM679 189h1v3h-1zM679 497h1v3h-1zM679 483h2v1h-2zM680 139h1v2h-1zM680 187h1v2h-1zM680 208h1v1h-1zM680 500h1v2h-1zM680 548h1v2h-1zM681 141h1v1h-1zM681 184h1v3h-1zM681 207h1v1h-1zM681 502h1v3h-1zM681 547h1v1h-1zM681 484h2v1h-2zM682 142h1v2h-1zM682 181h1v3h-1zM682 206h1v1h-1zM682 505h1v3h-1zM682 545h1v2h-1zM683 144h1v2h-1zM683 178h1v3h-1zM683 204h1v2h-1zM683 485h1v1h-1zM683 508h1v3h-1zM683 543h1v2h-1zM683 549h1v1h-1zM684 146h1v1h-1zM684 176h1v2h-1zM684 201h1v3h-1zM684 486h1v2h-1zM684 511h1v2h-1zM684 542h1v1h-1zM684 548h1v1h-1zM685 147h1v2h-1zM685 173h1v3h-1zM685 198h1v3h-1zM685 488h1v2h-1zM685 513h1v3h-1zM685 540h1v2h-1zM685 546h1v2h-1zM686 149h1v1h-1zM686 170h1v3h-1zM686 196h1v2h-1zM686 490h1v3h-1zM686 516h1v3h-1zM686 539h1v1h-1zM686 545h1v1h-1zM687 150h1v2h-1zM687 167h1v3h-1zM687 193h1v3h-1zM687 493h1v3h-1zM687 519h1v3h-1zM687 537h1v2h-1zM687 543h1v2h-1zM688 152h1v2h-1zM688 164h1v3h-1zM688 190h1v3h-1zM688 496h1v2h-1zM688 522h1v3h-1zM688 535h1v2h-1zM688 542h1v1h-1zM689 154h1v1h-1zM689 162h1v2h-1zM689 188h1v2h-1zM689 498h1v3h-1zM689 525h1v2h-1zM689 534h1v1h-1zM689 540h1v2h-1zM690 155h1v2h-1zM690 159h1v3h-1zM690 185h1v3h-1zM690 501h1v3h-1zM690 527h1v3h-1zM690 532h1v2h-1zM690 538h1v2h-1zM691 157h1v1h-1zM691 182h1v3h-1zM691 504h1v3h-1zM691 530h1v2h-1zM691 537h1v1h-1zM691 158h2v1h-2zM692 180h1v2h-1zM692 507h1v3h-1zM692 535h1v2h-1zM693 159h1v1h-1zM693 177h1v3h-1zM693 510h1v3h-1zM693 534h1v1h-1zM694 160h1v2h-1zM694 174h1v3h-1zM694 513h1v2h-1zM694 532h1v2h-1zM695 162h1v1h-1zM695 172h1v2h-1zM695 515h1v3h-1zM695 531h1v1h-1zM696 163h1v2h-1zM696 169h1v3h-1zM696 518h1v3h-1zM696 529h1v2h-1zM697 165h1v4h-1zM697 521h1v8h-1z" fill="#000"/>
    <path d="M357.5,551 V137.5 H946" fill="none" stroke="#acac9a"/>
    <path d="M358.5,550 V138.5 H945 M358,551.5 H946.5 V138" fill="none" stroke="#fff"/>
    <path d="M359,550.5 H945.5 V139" fill="none" stroke="#acac9a"/>
  </svg>
<div class="tx" style="left:30px;top:9px;font-size:11.6px;letter-spacing:0.071px;">eAssistant - GWJ Technology GmbH</div>
<div class="tx" style="left:6px;top:36px;font-size:12px;letter-spacing:0.285px;"><u>F</u>ile</div>
<div class="tx" style="left:39px;top:36px;font-size:12px;letter-spacing:0.474px;color:#7a828a"><u>E</u>dit</div>
<div class="tx" style="left:72px;top:36px;font-size:12px;letter-spacing:0.349px;color:#7a828a"><u>P</u>roject</div>
<div class="tx" style="left:123px;top:36px;font-size:12px;letter-spacing:0.445px;color:#7a828a"><u>R</u>eport</div>
<div class="tx" style="left:173px;top:36px;font-size:12px;letter-spacing:0.028px;">E<u>x</u>tras</div>
<div class="tx" style="left:220px;top:36px;font-size:12px;letter-spacing:0.253px;"><u>H</u>elp</div>
<div class="tx" style="left:22px;top:76px;font-size:12px;letter-spacing:0.121px;">Shaft / bearings</div>
<div class="tx" style="left:22px;top:102px;font-size:12px;letter-spacing:0.155px;">Gear calculation</div>
<div class="tx" style="left:21px;top:128px;font-size:12px;letter-spacing:-0.061px;color:#fff;font-weight:bold">Connections</div>
<div class="tx" style="left:22px;top:151px;font-size:12px;letter-spacing:0.222px;">Bolts</div>
<div class="tx" style="left:22px;top:171px;font-size:12px;letter-spacing:0.061px;">Interference fit</div>
<div class="tx" style="left:22px;top:191px;font-size:12px;letter-spacing:0.151px;">Parallel keys</div>
<div class="tx" style="left:21px;top:211px;font-size:12px;letter-spacing:-0.118px;color:#fff;font-weight:bold">Involute splines</div>
<div class="tx" style="left:22px;top:231px;font-size:12px;letter-spacing:0.166px;">Serrated shaft</div>
<div class="tx" style="left:22px;top:251px;font-size:12px;letter-spacing:0.247px;">Splined shaft</div>
<div class="tx" style="left:22px;top:271px;font-size:12px;letter-spacing:0.220px;">Bolts and Pins</div>
<div class="tx" style="left:22px;top:291px;font-size:12px;letter-spacing:0.271px;">Clamp connection</div>
<div class="tx" style="left:22px;top:311px;font-size:12px;letter-spacing:0.216px;">Hirth coupling</div>
<div class="tx" style="left:22px;top:334px;font-size:12px;letter-spacing:0.181px;">Spring calculation</div>
<div class="tx" style="left:22px;top:360px;font-size:12px;letter-spacing:0.143px;">Belt calculation</div>
<div class="tx" style="left:22px;top:386px;font-size:12px;letter-spacing:0.321px;">Gratis modules</div>
<div class="tx" style="left:225px;top:80px;font-size:12px;letter-spacing:0.135px;">Open</div>
<div class="tx" style="left:313px;top:80px;font-size:12px;letter-spacing:-0.165px;">Save</div>
<div class="tx" style="left:388px;top:80px;font-size:12px;letter-spacing:0.283px;">Local</div>
<div class="tx" style="left:466px;top:80px;font-size:12px;letter-spacing:0.163px;">Calculate</div>
<div class="tx" style="left:675px;top:80px;font-size:12px;letter-spacing:-0.215px;">CAD</div>
<div class="tx" style="left:743px;top:80px;font-size:12px;letter-spacing:0.278px;">Report</div>
<div class="tx" style="left:832px;top:80px;font-size:12px;letter-spacing:0.220px;">Options</div>
<div class="tx" style="left:929px;top:80px;font-size:12px;letter-spacing:0.253px;">Help</div>
<div class="tx" style="left:198px;top:111px;font-size:12px;letter-spacing:0.088px;">Display of tooth form</div>
<div class="tx" style="left:243px;top:143px;font-size:12px;letter-spacing:0.441px;">Dimensioning</div>
<div class="tx" style="left:255px;top:173px;font-size:12px;letter-spacing:0.114px;">Geometry</div>
<div class="tx" style="left:269px;top:203px;font-size:12px;letter-spacing:0.771px;">Tool</div>
<div class="tx" style="left:249px;top:233px;font-size:12px;letter-spacing:0.330px;">Allowances</div>
<div class="tx" style="left:251px;top:263px;font-size:12px;letter-spacing:0.320px;">Tooth form</div>
<div class="tx" style="left:244px;top:293px;font-size:12px;letter-spacing:0.126px;">Load capacity</div>
<div class="tx" style="left:246px;top:323px;font-size:12px;letter-spacing:0.128px;">Modifications</div>
<div class="tx" style="left:255px;top:498px;font-size:12px;letter-spacing:0.181px;">Total view</div>
<div class="tx" style="left:252px;top:528px;font-size:12px;letter-spacing:0.134px;color:#7d848b">Detail view</div>
<div class="tx" style="left:225px;top:561px;font-size:12px;letter-spacing:0.105px;">Rotating angle [°]</div>
<div class="tx" style="left:250px;top:583px;font-size:12px;letter-spacing:-0.062px;">4.0</div>
<div class="tx" style="left:249px;top:616px;font-size:12px;letter-spacing:0.150px;">Rotation</div>
<div class="tx" style="left:260px;top:638px;font-size:12px;letter-spacing:-0.097px;color:#7d848b">Stop</div>
<div class="tx" style="left:410px;top:561px;font-size:12px;letter-spacing:0.130px;">Tooth thick. allow. [µm]</div>
<div class="tx" style="left:367px;top:581px;font-size:12px;letter-spacing:-0.131px;">Gear 1</div>
<div class="tx" style="left:367px;top:606px;font-size:12px;letter-spacing:-0.031px;">Gear 2</div>
<div class="tx" style="left:484px;top:581px;font-size:12px;letter-spacing:0.108px;">-81.5</div>
<div class="tx" style="left:484px;top:606px;font-size:12px;letter-spacing:0.108px;">-48.5</div>
<div class="tx" style="left:557px;top:561px;font-size:12px;letter-spacing:0.161px;">Tip Ø allowances [µm]</div>
<div class="tx" style="left:624px;top:581px;font-size:12px;letter-spacing:-0.062px;">0.0</div>
<div class="tx" style="left:624px;top:606px;font-size:12px;letter-spacing:-0.062px;">0.0</div>
<div class="tx" style="left:712px;top:563px;font-size:12px;letter-spacing:0.099px;">Display the tooth form</div>
<div class="tx" style="left:733px;top:586px;font-size:12px;letter-spacing:0.197px;color:#6b6f73">with allowance</div>
<div class="tx" style="left:733px;top:611px;font-size:12px;letter-spacing:0.197px;color:#6b6f73">with allowance</div>
<div id="frame"></div>
</div>
</body>
</html>
